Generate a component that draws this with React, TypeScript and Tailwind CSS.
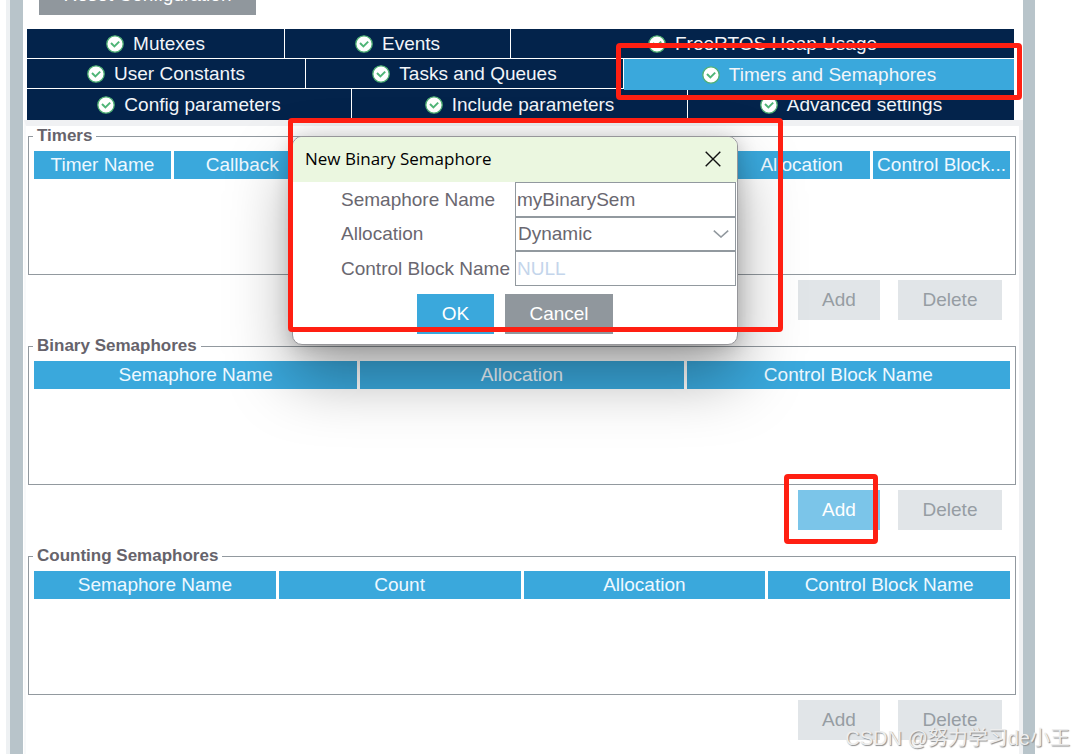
import React, { useState } from "react";

type Tab = { name: string; size: string };

const tabRows: Tab[][] = [
  [
    { name: "Mutexes", size: "flex-[257_1_0%]" },
    { name: "Events", size: "flex-[225_1_0%]" },
    { name: "FreeRTOS Heap Usage", size: "flex-[503_1_0%]" },
  ],
  [
    { name: "User Constants", size: "flex-[278_1_0%]" },
    { name: "Tasks and Queues", size: "flex-[317_1_0%]" },
    { name: "Timers and Semaphores", size: "flex-[390_1_0%]" },
  ],
  [
    { name: "Config parameters", size: "flex-[324_1_0%]" },
    { name: "Include parameters", size: "flex-[335_1_0%]" },
    { name: "Advanced settings", size: "flex-[326_1_0%]" },
  ],
];

const groups = [
  {
    title: "Timers",
    columns: ["Timer Name", "Callback", "", "", "", "Allocation", "Control Block..."],
    canAdd: false,
  },
  {
    title: "Binary Semaphores",
    columns: ["Semaphore Name", "Allocation", "Control Block Name"],
    canAdd: true,
  },
  {
    title: "Counting Semaphores",
    columns: ["Semaphore Name", "Count", "Allocation", "Control Block Name"],
    canAdd: false,
  },
];

function CheckIcon() {
  return (
    <svg className="size-[18px] shrink-0" viewBox="0 0 18 18" fill="none">
      <circle cx="9" cy="9" r="8.2" fill="#fff" stroke="#4fb074" strokeWidth="1.3" />
      <path d="M5 8 8.4 11.4 13.2 6.6" stroke="#4fb577" strokeWidth="2" />
    </svg>
  );
}

function Tabs() {
  const [active, setActive] = useState("Timers and Semaphores");

  return (
    <div role="tablist" className="mt-3.5 mr-[9px] ml-[3px] flex flex-col gap-px">
      {tabRows.map((row, i) => (
        <div key={i} className="flex h-[29px] gap-px last:h-[31px]">
          {row.map((tab) => (
            <button
              key={tab.name}
              role="tab"
              aria-selected={tab.name === active}
              onClick={() => setActive(tab.name)}
              className={`flex min-w-0 items-center justify-center gap-[9px] whitespace-nowrap text-[#f2f5f9] ${tab.size} ${
                tab.name === active
                  ? "relative z-10 h-[31px] bg-[#3aa8dc]"
                  : "h-full bg-[#03234b]"
              }`}
            >
              <CheckIcon />
              {tab.name}
            </button>
          ))}
        </div>
      ))}
    </div>
  );
}

type GroupProps = {
  title: string;
  columns: string[];
  canAdd: boolean;
  onAdd: () => void;
};

function Group({ title, columns, canAdd, onAdd }: GroupProps) {
  return (
    <section>
      <fieldset className="h-[149px] border border-[#92999f] px-0.5 pt-[5px]">
        <legend className="ml-0.5 px-1 text-[17px] leading-5 font-bold text-[#66636b]">
          {title}
        </legend>
        <table className="w-full table-fixed border-separate border-spacing-x-[3px] border-spacing-y-0">
          <thead>
            <tr>
              {columns.map((column, i) => (
                <th
                  key={i}
                  className="h-7 overflow-hidden bg-[#3aa8dc] p-0 leading-7 font-normal whitespace-nowrap text-[#eef8ff]"
                >
                  {column}
                </th>
              ))}
            </tr>
          </thead>
        </table>
      </fieldset>
      <div className="mt-[5px] mr-3.5 mb-4 flex h-10 justify-end gap-[18px]">
        <button
          disabled={!canAdd}
          onClick={onAdd}
          className="w-[82px] bg-[#7bc5e9] text-white disabled:bg-[#e1e5e8] disabled:text-[#969da3]"
        >
          Add
        </button>
        <button
          disabled
          className="w-[104px] bg-[#7bc5e9] text-white disabled:bg-[#e1e5e8] disabled:text-[#969da3]"
        >
          Delete
        </button>
      </div>
    </section>
  );
}

function SemaphoreDialog({ onClose }: { onClose: () => void }) {
  return (
    <div
      role="dialog"
      aria-labelledby="dialog-title"
      className="absolute top-[136px] left-[292px] z-20 w-[446px] overflow-hidden rounded-[10px] border border-[#96969a] bg-white text-[#6a6770] shadow-[0_32px_64px_rgba(0,0,0,0.34),0_2px_20px_rgba(0,0,0,0.2)]"
    >
      <div className="flex h-[45px] items-center justify-between bg-[#ebf7e0] pr-4 pb-0.5 pl-3 text-black">
        <h2
          id="dialog-title"
          className="font-['Open_Sans','Noto_Sans',sans-serif] text-[17px]"
        >
          New Binary Semaphore
        </h2>
        <button aria-label="Close" onClick={onClose}>
          <svg className="size-4" viewBox="0 0 16 16" stroke="#111" strokeWidth="1.4">
            <path d="M.7.7 15.3 15.3M15.3.7.7 15.3" />
          </svg>
        </button>
      </div>
      <form onSubmit={(e) => e.preventDefault()}>
        <div className="mr-px ml-12 grid grid-cols-[174px_1fr] items-center">
          <label htmlFor="name">Semaphore Name</label>
          <input
            id="name"
            defaultValue="myBinarySem"
            className="h-[35px] w-full border border-[#92999f] px-px outline-none"
          />
          <label htmlFor="allocation">Allocation</label>
          <div className="grid items-center">
            <select
              id="allocation"
              className="col-start-1 row-start-1 h-[34px] w-full appearance-none border border-[#92999f] bg-white px-0.5 outline-none"
            >
              <option>Dynamic</option>
              <option>Static</option>
            </select>
            <svg
              className="pointer-events-none col-start-1 row-start-1 mr-[7px] h-2 w-4 justify-self-end"
              viewBox="0 0 16 8"
              fill="none"
              stroke="#92999f"
              strokeWidth="1.6"
            >
              <path d="M.8.6 8 7 15.2.6" />
            </svg>
          </div>
          <label htmlFor="block" className="whitespace-nowrap">
            Control Block Name
          </label>
          <input
            id="block"
            placeholder="NULL"
            className="h-[35px] w-full border border-[#92999f] px-px outline-none placeholder:text-[#c4d5eb]"
          />
        </div>
        <div className="mt-2 mb-2.5 flex h-10 justify-center gap-[11px] text-white">
          <button className="w-[77px] bg-[#3aa8dc]">OK</button>
          <button type="button" onClick={onClose} className="w-[108px] bg-[#90979d]">
            Cancel
          </button>
        </div>
      </form>
    </div>
  );
}

function App() {
  const [open, setOpen] = useState(true);

  return (
    <div className="relative flex min-h-screen overflow-hidden bg-white pr-[39px] pl-1.5 font-['Liberation_Sans',Arial,sans-serif] text-[19px] leading-6">
      <div className="w-1 bg-[#eef1f3]" />
      <div className="w-[13px] bg-[#b8c4ca]" />
      <main className="flex min-w-0 flex-1 flex-col pl-px">
        <button className="-mt-[25px] ml-[15px] h-10 w-[217px] shrink-0 bg-[#90979d] text-white">
          Reset Configuration
        </button>
        <Tabs />
        <div className="flex-1 border-t-[6px] border-r-4 border-l-2 border-[#f0f1f3] border-l-[#f8f9fa] bg-white">
          <div className="mr-[3px] ml-0.5">
            {groups.map((group) => (
              <Group key={group.title} {...group} onAdd={() => setOpen(true)} />
            ))}
          </div>
        </div>
      </main>
      <div className="w-3 bg-[#b8c4ca]" />

      {open && <SemaphoreDialog onClose={() => setOpen(false)} />}

      {/* highlight frames */}
      <div className="pointer-events-none absolute top-[43px] left-[616px] z-30 h-[57px] w-[406px] rounded border-5 border-[#ff1f12]" />
      <div className="pointer-events-none absolute top-[118px] left-[288px] z-30 h-[214px] w-[495px] rounded border-5 border-[#ff1f12]" />
      <div className="pointer-events-none absolute top-[474px] left-[784px] z-30 h-[70px] w-[94px] rounded border-5 border-[#ff1f12]" />

      <p className="pointer-events-none absolute right-1 bottom-1.5 z-30 font-['Liberation_Sans','Noto_Sans_CJK_SC',sans-serif] text-xl leading-6 whitespace-nowrap text-[#ededed] [text-shadow:1px_1px_1px_#8c8c8c]">
        CSDN @努力学习de小王
      </p>
    </div>
  );
}

export default App;
